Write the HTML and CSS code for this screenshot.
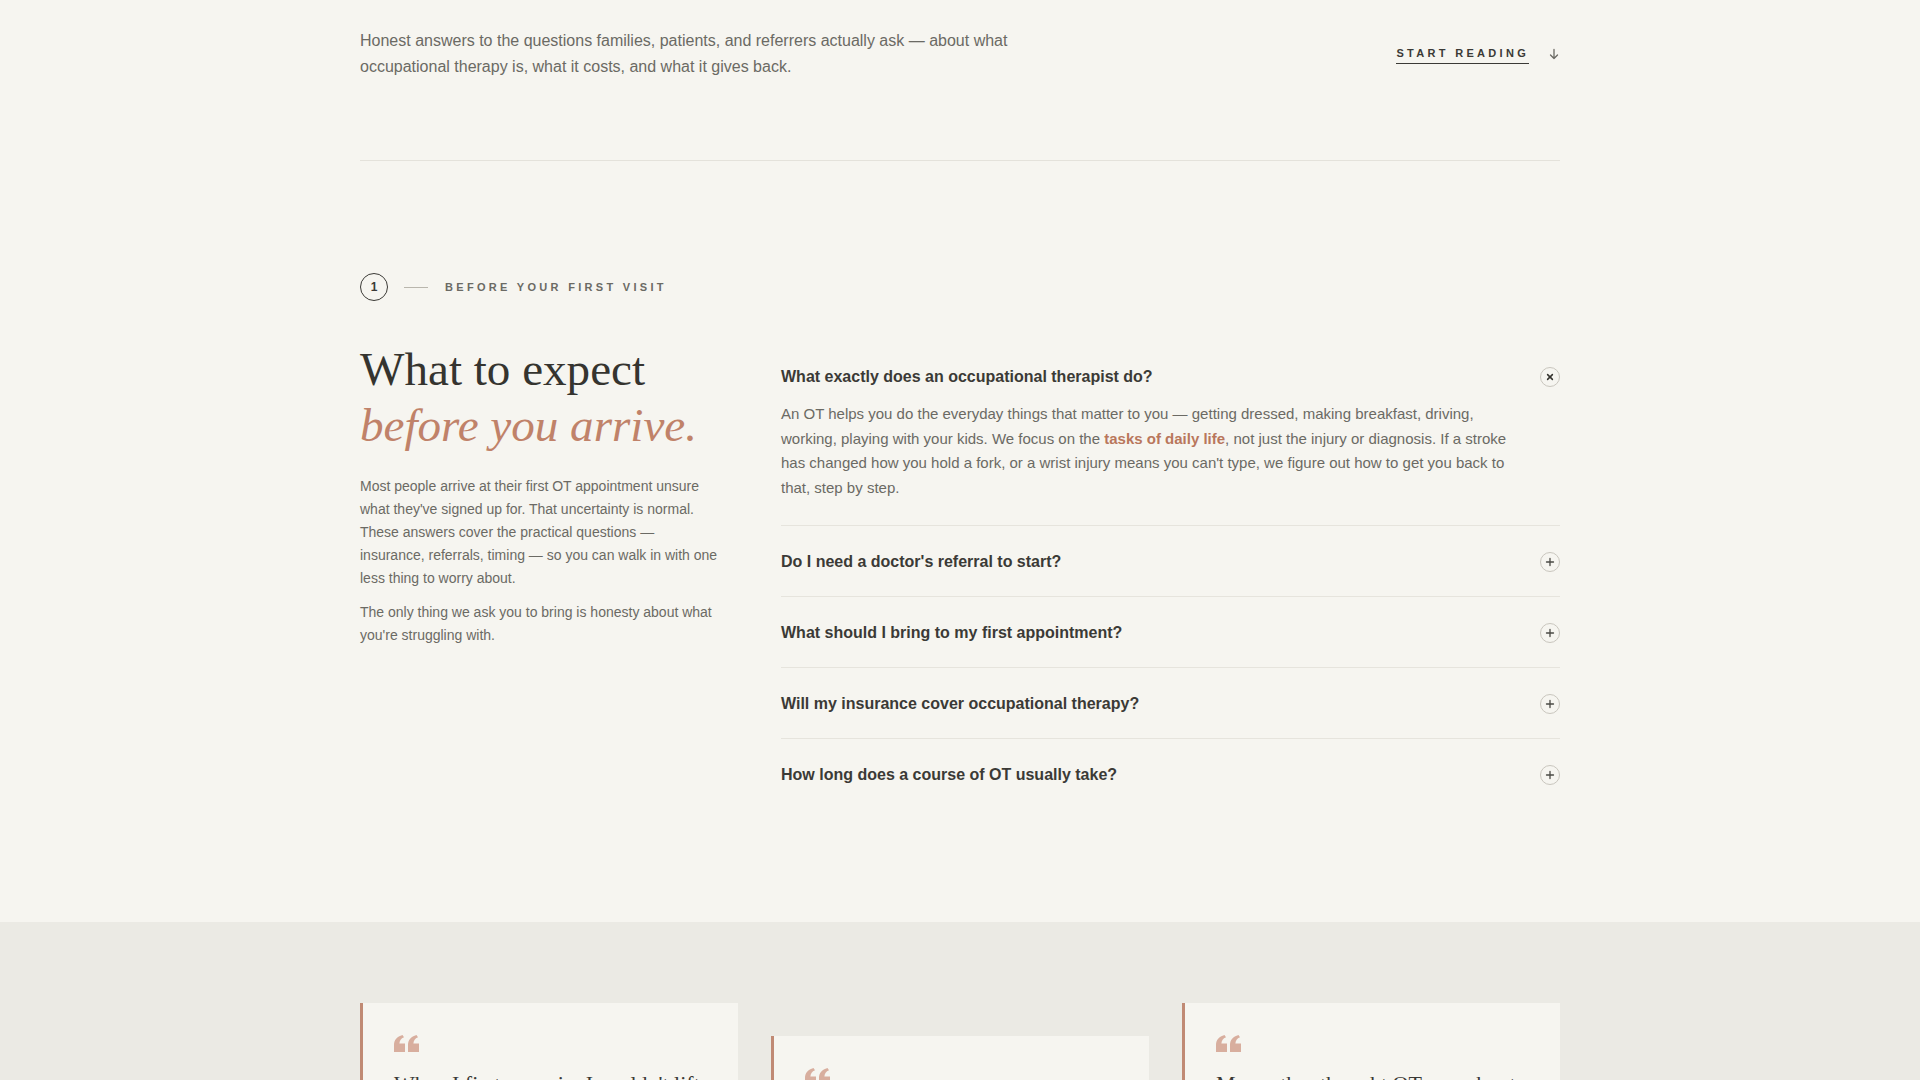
FILE: index.html
```html
<!DOCTYPE html>
<html lang="en">
<head>
<meta charset="utf-8">
<title>OT Questions</title>
<link rel="stylesheet" href="styles.css">
</head>
<body>
<div class="wrap">
  <section class="intro">
    <p class="intro-text">Honest answers to the questions families, patients, and referrers actually ask — about what occupational therapy is, what it costs, and what it gives back.</p>
    <a class="start" href="#s1"><span class="start-label">START READING</span>
      <svg class="start-arrow" width="12" height="12" viewBox="0 0 12 12" fill="none" stroke="currentColor" stroke-width="1.3" stroke-linecap="round" stroke-linejoin="round"><path d="M6 1.5v9M2.5 7l3.5 3.5L9.5 7"/></svg>
    </a>
  </section>

  <section class="faq-section" id="s1">
    <div class="sec-head">
      <span class="sec-num">1</span>
      <span class="sec-line"></span>
      <span class="sec-label">BEFORE YOUR FIRST VISIT</span>
    </div>
    <div class="faq-grid">
      <div class="faq-intro">
        <h2 class="faq-title">What to expect<br><em>before you arrive.</em></h2>
        <p>Most people arrive at their first OT appointment unsure what they've signed up for. That uncertainty is normal. These answers cover the practical questions — insurance, referrals, timing — so you can walk in with one less thing to worry about.</p>
        <p>The only thing we ask you to bring is honesty about what you're struggling with.</p>
      </div>
      <div class="faq-list">
        <div class="faq-item open">
          <div class="faq-q"><span>What exactly does an occupational therapist do?</span>
            <span class="faq-icon"><svg width="10" height="10" viewBox="0 0 10 10" stroke="currentColor" stroke-width="1.5" stroke-linecap="round"><path d="M2.6 2.6l4.8 4.8M7.4 2.6l-4.8 4.8"/></svg></span>
          </div>
          <p class="faq-a">An OT helps you do the everyday things that matter to you — getting dressed, making breakfast, driving, working, playing with your kids. We focus on the <strong>tasks of daily life</strong>, not just the injury or diagnosis. If a stroke has changed how you hold a fork, or a wrist injury means you can't type, we figure out how to get you back to that, step by step.</p>
        </div>
        <div class="faq-item">
          <div class="faq-q"><span>Do I need a doctor's referral to start?</span>
            <span class="faq-icon"><svg width="10" height="10" viewBox="0 0 10 10" stroke="currentColor" stroke-width="1.3" stroke-linecap="round"><path d="M5 1.5v7M1.5 5h7"/></svg></span>
          </div>
        </div>
        <div class="faq-item">
          <div class="faq-q"><span>What should I bring to my first appointment?</span>
            <span class="faq-icon"><svg width="10" height="10" viewBox="0 0 10 10" stroke="currentColor" stroke-width="1.3" stroke-linecap="round"><path d="M5 1.5v7M1.5 5h7"/></svg></span>
          </div>
        </div>
        <div class="faq-item">
          <div class="faq-q"><span>Will my insurance cover occupational therapy?</span>
            <span class="faq-icon"><svg width="10" height="10" viewBox="0 0 10 10" stroke="currentColor" stroke-width="1.3" stroke-linecap="round"><path d="M5 1.5v7M1.5 5h7"/></svg></span>
          </div>
        </div>
        <div class="faq-item last">
          <div class="faq-q"><span>How long does a course of OT usually take?</span>
            <span class="faq-icon"><svg width="10" height="10" viewBox="0 0 10 10" stroke="currentColor" stroke-width="1.3" stroke-linecap="round"><path d="M5 1.5v7M1.5 5h7"/></svg></span>
          </div>
        </div>
      </div>
    </div>
  </section>
</div>

<section class="band">
  <div class="wrap cards">
    <figure class="card">
      <svg class="quote-mark" width="26" height="17" viewBox="0 0 26 17"><path d="M0 17V10C0 5 3 1.5 8.5 0L10 2.2C7 3.4 5.6 5.4 5.4 8.6H11V17Z M14 17V10C14 5 17 1.5 22.5 0L24 2.2C21 3.4 19.6 5.4 19.4 8.6H25V17Z"/></svg>
      <blockquote>When I first came in, I couldn't lift a kettle without help.</blockquote>
    </figure>
    <figure class="card card-offset">
      <svg class="quote-mark" width="26" height="17" viewBox="0 0 26 17"><path d="M0 17V10C0 5 3 1.5 8.5 0L10 2.2C7 3.4 5.6 5.4 5.4 8.6H11V17Z M14 17V10C14 5 17 1.5 22.5 0L24 2.2C21 3.4 19.6 5.4 19.4 8.6H25V17Z"/></svg>
      <blockquote>They treated my son like a person, not a list of symptoms.</blockquote>
    </figure>
    <figure class="card">
      <svg class="quote-mark" width="26" height="17" viewBox="0 0 26 17"><path d="M0 17V10C0 5 3 1.5 8.5 0L10 2.2C7 3.4 5.6 5.4 5.4 8.6H11V17Z M14 17V10C14 5 17 1.5 22.5 0L24 2.2C21 3.4 19.6 5.4 19.4 8.6H25V17Z"/></svg>
      <blockquote>My mother thought OT was about finding her a new job.</blockquote>
    </figure>
  </div>
</section>
</body>
</html>
```

FILE: styles.css
```css
* { box-sizing: border-box; }
html, body { margin: 0; padding: 0; }
body {
  background: #f6f5f0;
  color: #3b3a36;
  font-family: "Liberation Sans", Arial, sans-serif;
}
.wrap {
  width: 1200px;
  margin: 0 auto;
}

/* intro */
.intro {
  display: flex;
  justify-content: space-between;
  align-items: center;
  padding: 28px 0 80px;
  border-bottom: 1px solid #e4e2db;
}
.intro-text {
  margin: 0;
  max-width: 665px;
  font-size: 16px;
  line-height: 26px;
  color: #6b6a64;
}
.start {
  display: flex;
  align-items: center;
  gap: 19px;
  color: #3b3a36;
  text-decoration: none;
  margin-top: 2px;
}
.start-label {
  font-size: 11px;
  font-weight: 700;
  letter-spacing: 0.3em;
  padding-bottom: 4px;
  border-bottom: 1.5px solid #3b3a36;
}
.start-arrow { color: #6b6a64; margin-top: -3px; }

/* section */
.faq-section {
  padding: 112px 0 113px;
}
.sec-head {
  display: flex;
  align-items: center;
}
.sec-num {
  width: 28px;
  height: 28px;
  border: 1.3px solid #3b3a36;
  border-radius: 50%;
  display: flex;
  align-items: center;
  justify-content: center;
  font-size: 12px;
  font-weight: 700;
  color: #3b3a36;
}
.sec-line {
  width: 24px;
  height: 1px;
  background: #b9b6ad;
  margin: 0 17px 0 16px;
}
.sec-label {
  font-size: 11px;
  font-weight: 700;
  letter-spacing: 0.3em;
  color: #6b6a64;
}

.faq-grid {
  display: grid;
  grid-template-columns: 372px 1fr;
  column-gap: 49px;
  margin-top: 40px;
}
.faq-title {
  margin: 0 0 22px;
  font-family: "Liberation Serif", "Times New Roman", serif;
  font-weight: 400;
  font-size: 47.1px;
  line-height: 56px;
  color: #35342f;
}
.faq-title em {
  font-style: italic;
  color: #c08269;
}
.faq-intro p {
  margin: 0 0 11px;
  font-size: 14px;
  line-height: 23px;
  color: #6b6a64;
  max-width: 360px;
}

.faq-item {
  border-bottom: 1px solid #e6e4dd;
}
.faq-item.last { border-bottom: none; }
.faq-q {
  display: flex;
  justify-content: space-between;
  align-items: center;
  padding: 25px 0;
  min-height: 70px;
  font-size: 16px;
  line-height: 19px;
  font-weight: 700;
  color: #3b3a36;
}
.faq-item.open .faq-q { padding-bottom: 16px; min-height: 0; }
.faq-icon {
  width: 20px;
  height: 20px;
  border: 1px solid #c9c6be;
  border-radius: 50%;
  display: flex;
  align-items: center;
  justify-content: center;
  color: #4a4944;
  flex: none;
  position: relative;
  top: 1px;
}
.faq-item.open .faq-icon { color: #35342f; }
.faq-a {
  margin: 0;
  padding: 0 44px 25px 0;
  font-size: 15px;
  line-height: 24.6px;
  color: #6b6a64;
}
.faq-a strong {
  color: #b9775c;
  font-weight: 700;
}

/* band */
.band {
  background: #ebeae4;
  padding: 81px 0 80px;
}
.cards {
  display: grid;
  grid-template-columns: repeat(3, 1fr);
  column-gap: 33px;
  align-items: start;
}
.card {
  margin: 0;
  background: #f6f5f0;
  border-left: 3px solid #c08a74;
  padding: 32px 32px 40px 31px;
  min-height: 260px;
}
.card-offset { margin-top: 33px; }
.quote-mark {
  display: block;
  fill: #d8ae9e;
}
.card blockquote {
  margin: 16px 0 0;
  font-family: "Liberation Serif", "Times New Roman", serif;
  font-size: 22px;
  line-height: 32px;
  color: #3b3a36;
}
```
